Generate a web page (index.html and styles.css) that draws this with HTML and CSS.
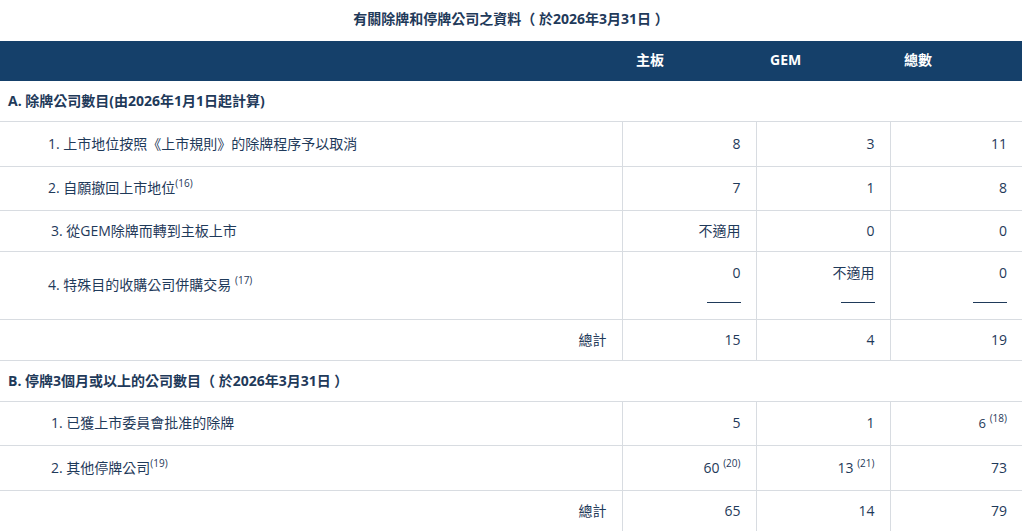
FILE: index.html
```html
<!DOCTYPE html>
<html lang="zh-Hant">
<head>
<meta charset="utf-8">
<link rel="stylesheet" href="styles.css">
</head>
<body>
<div class="title">有關除牌和停牌公司之資料（ 於2026年3月31日 ）</div>
<table class="tbl">
  <colgroup>
    <col class="c-label"><col class="c-num"><col class="c-num"><col class="c-last">
  </colgroup>
  <thead>
    <tr><th></th><th>主板</th><th>GEM</th><th>總數</th></tr>
  </thead>
  <tbody>
    <tr class="sec h40"><td colspan="4">A. 除牌公司數目(由2026年1月1日起計算)</td></tr>
    <tr class="h45"><td class="lbl">1. 上市地位按照《上市規則》的除牌程序予以取消</td><td class="n">8</td><td class="n">3</td><td class="n">11</td></tr>
    <tr class="h44"><td class="lbl">2. 自願撤回上市地位<sup>(16)</sup></td><td class="n">7</td><td class="n">1</td><td class="n">8</td></tr>
    <tr class="h41"><td class="lbl lbl2">3. 從GEM除牌而轉到主板上市</td><td class="n">不適用</td><td class="n">0</td><td class="n">0</td></tr>
    <tr class="h68"><td class="lbl">4. 特殊目的收購公司併購交易 <sup>(17)</sup></td><td class="n top">0<span class="ul"></span></td><td class="n top">不適用<span class="ul"></span></td><td class="n top">0<span class="ul"></span></td></tr>
    <tr class="h41"><td class="tot">總計</td><td class="n">15</td><td class="n">4</td><td class="n">19</td></tr>
    <tr class="sec h41"><td colspan="4">B. 停牌3個月或以上的公司數目（ 於2026年3月31日 ）</td></tr>
    <tr class="h44"><td class="lbl lbl2">1. 已獲上市委員會批准的除牌</td><td class="n">5</td><td class="n">1</td><td class="n"><span class="sm">6</span> <sup>(18)</sup></td></tr>
    <tr class="h45"><td class="lbl lbl2">2. 其他停牌公司<sup>(19)</sup></td><td class="n">60 <sup>(20)</sup></td><td class="n">13 <sup>(21)</sup></td><td class="n">73</td></tr>
    <tr class="h41"><td class="tot">總計</td><td class="n">65</td><td class="n">14</td><td class="n">79</td></tr>
  </tbody>
</table>
</body>
</html>
```

FILE: styles.css
```css
html, body {
  margin: 0;
  padding: 0;
  background: #ffffff;
}
body {
  font-family: "Open Sans", "Noto Sans CJK TC", sans-serif;
  font-size: 14px;
  color: #1f3a5a;
  width: 1022px;
  overflow: hidden;
}
.title {
  height: 41px;
  line-height: 38px;
  text-align: center;
  font-weight: 700;
  font-size: 14px;
}
.tbl {
  width: 1022px;
  border-collapse: collapse;
  table-layout: fixed;
}
.c-label { width: 622px; }
.c-num { width: 134px; }
.c-last { width: 132px; }
.tbl thead th {
  background: #15406a;
  color: #ffffff;
  height: 36px;
  padding: 0 14px 4px;
  text-align: left;
  font-weight: 700;
  vertical-align: middle;
}
.tbl td {
  border-top: 1px solid #d8dce1;
  padding: 0 15px;
  vertical-align: middle;
  line-height: 20px;
}
.tbl tbody tr:first-child td { border-top: none; }
.tbl td + td { border-left: 1px solid #d8dce1; }
.tbl .sec td {
  font-weight: 700;
  padding-left: 8px;
}
.h40 { height: 40px; }
.h41 { height: 41px; }
.h44 { height: 44px; }
.h45 { height: 45px; }
.h68 { height: 68px; }
.tbl td.lbl { padding-left: 48px; }
.tbl td.lbl2 { padding-left: 51px; }
.tot { text-align: right; }
.n { text-align: right; }
.tbl td.top {
  vertical-align: top;
  padding-top: 11px;
}
.ul {
  display: block;
  width: 34px;
  height: 1px;
  background: #1f3a5a;
  margin: 19px 0 0 auto;
}
sup {
  font-size: 10px;
  line-height: 0;
  vertical-align: 6px;
}
.sm { font-size: 13px; }
```
